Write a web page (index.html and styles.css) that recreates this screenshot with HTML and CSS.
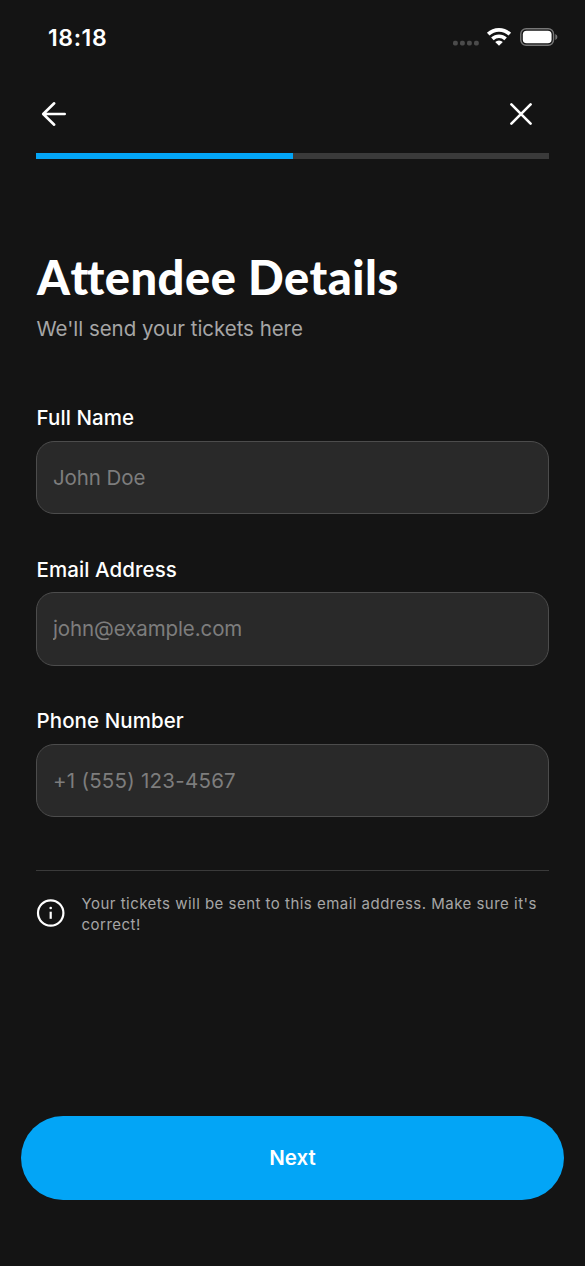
FILE: index.html
```html
<!DOCTYPE html>
<html lang="en">
<head>
<meta charset="utf-8">
<meta name="viewport" content="width=device-width, initial-scale=1">
<title>Attendee Details</title>
<link rel="stylesheet" href="styles.css">
</head>
<body>
<div class="screen">
  <div class="status">
    <span class="clock">18:18</span>
    <div class="status-icons">
      <svg class="cell" width="26" height="6" viewBox="0 0 26 6" fill="#4b4b4b"><rect x="0" y="0.7" width="4.8" height="4.8" rx="1.7"/><rect x="7" y="0.7" width="4.8" height="4.8" rx="1.7"/><rect x="14" y="0.7" width="4.8" height="4.8" rx="1.7"/><rect x="21" y="0.7" width="4.8" height="4.8" rx="1.7"/></svg>
      <svg class="wifi" width="26" height="19" viewBox="0 0 26 19" fill="none" stroke="#fff" stroke-width="3.7"><path d="M2.2 7.2a15.6 15.6 0 0 1 21.6 0"/><path d="M6.4 11.9a9.6 9.6 0 0 1 13.2 0"/><path d="M9.2 15.1a5.4 5.4 0 0 1 7.6 0L13 18.8z" fill="#fff" stroke="none"/></svg>
      <svg class="battery" width="38" height="18" viewBox="0 0 38 18"><rect x="0.75" y="0.75" width="32.8" height="16.5" rx="5.4" fill="none" stroke="#777" stroke-width="1.4"/><rect x="2.8" y="2.8" width="28.8" height="12.4" rx="3.8" fill="#fff"/><path d="M35.3 6.1q2.1.9 2.1 2.9t-2.1 2.9z" fill="#777"/></svg>
    </div>
  </div>
  <div class="nav">
    <svg width="26" height="26" viewBox="0 0 26 26" fill="none" stroke="#fff" stroke-width="2.6" stroke-linecap="round" stroke-linejoin="round"><path d="M13.2 2.3 2.2 13l11 10.7M2.4 13h21.3"/></svg>
    <svg width="22" height="22" viewBox="0 0 22 22" fill="none" stroke="#fff" stroke-width="2.6" stroke-linecap="round"><path d="m1.4 1.4 19.2 19.2M20.6 1.4 1.4 20.6"/></svg>
  </div>
  <div class="progress"><div class="progress-fill"></div></div>
  <h1 class="title">A<span class="joined">t</span>tendee Details</h1>
  <p class="subtitle">We'll send your tickets here</p>
  <form class="form">
    <label class="field"><span class="label">Full Name</span><input class="input" type="text" placeholder="John Doe"></label>
    <label class="field"><span class="label">Email Address</span><input class="input" type="email" placeholder="john@example.com"></label>
    <label class="field"><span class="label">Phone Number</span><input class="input phone-input" type="tel" placeholder="+1 (555) 123-4567"></label>
  </form>
  <div class="note">
    <svg class="info" width="29" height="28" viewBox="0 0 29 28" fill="none" stroke="#fff" stroke-width="2.2"><circle cx="14.7" cy="14" r="12.7"/><path d="M14.7 12.7v7.1"/><circle cx="14.7" cy="9" r="1.3" fill="#fff" stroke="none"/></svg>
    <p class="note-text">Your tickets will be sent to this email address. Make sure it's<br>correct!</p>
  </div>
  <button class="next" type="button">Next</button>
</div>
</body>
</html>
```
FILE: styles.css
```css
* { box-sizing: border-box; }
body { margin: 0; background: #141414; color: #fff; font-family: Inter, "Liberation Sans", sans-serif; }
.screen { width: 585px; height: 1266px; display: flex; flex-direction: column; overflow: hidden; }
.status { height: 75px; padding: 0 27px 0 48px; display: flex; justify-content: space-between; align-items: center; flex: none; }
.clock { font-size: 23px; font-weight: 600; letter-spacing: 0.6px; line-height: 30px; }
.status-icons { display: flex; align-items: center; }
.cell { margin-top: 11px; }
.wifi { margin-left: 7px; margin-top: -2px; }
.battery { margin-left: 8px; margin-top: -1px; }
.nav { height: 78px; padding: 0 53.5px 0 41px; display: flex; justify-content: space-between; align-items: center; flex: none; }
.progress { margin: 0 36px; height: 5.5px; background: #3a3a3a; flex: none; }
.progress-fill { width: 50%; height: 100%; background: #03a5f6; }
.title { margin: 90.5px 36px 0 37px; font-family: Lato, sans-serif; font-size: 47px; font-weight: 900; letter-spacing: 0.5px; line-height: 56px; height: 56px; white-space: nowrap; flex: none; }
.joined { letter-spacing: -1.5px; }
.subtitle { margin: 9px 36px 0 36.5px; font-size: 20.5px; letter-spacing: -0.04px; line-height: 30px; color: #a6a6a6; flex: none; }
.form { margin: 59px 36px 0; display: flex; flex-direction: column; gap: 40.5px; flex: none; }
.field { display: flex; flex-direction: column; gap: 7.5px; height: 111px; }
.label { font-size: 20.5px; font-weight: 500; letter-spacing: 0.08px; line-height: 30px; padding-left: 0.5px; }
.input { height: 73.5px; width: 100%; padding: 0 16px; border: 1.5px solid #4c4c4c; border-radius: 18px; background: #292929; color: #fff; font: 400 20.5px Inter, "Liberation Sans", sans-serif; letter-spacing: -0.1px; outline: none; }
.phone-input { letter-spacing: 0.25px; }
.input::placeholder { color: #7d7d7d; opacity: 1; }
.note { margin: 53px 36px 0; padding-top: 22px; border-top: 1px solid #3a3a3a; display: flex; align-items: center; gap: 16.5px; flex: none; }
.info { flex: none; margin-top: -2px; }
.note-text { margin: 0; font-size: 15px; line-height: 21px; letter-spacing: 0.48px; color: #a6a6a6; white-space: nowrap; }
.next { margin: auto 21px 66.5px; height: 84px; border: 0; border-radius: 42px; background: #03a5f6; color: #fff; font: 600 20.5px Inter, "Liberation Sans", sans-serif; letter-spacing: 0; flex: none; }
```
